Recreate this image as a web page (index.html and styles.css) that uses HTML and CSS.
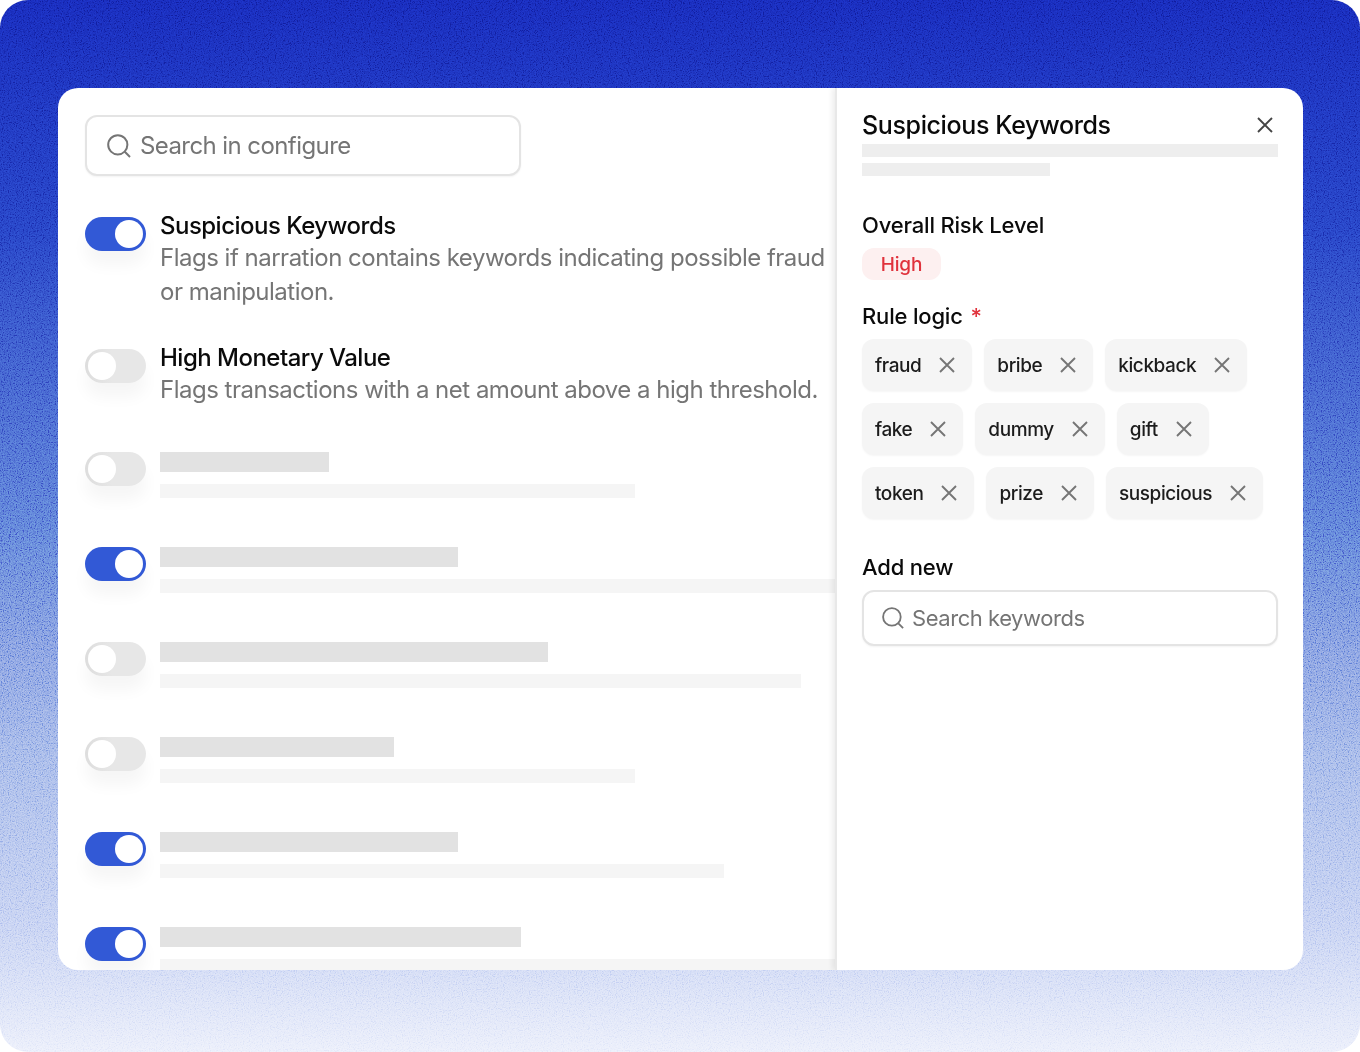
FILE: index.html
```html
<!DOCTYPE html>
<html lang="en">
<head>
    <meta charset="UTF-8">
    <title>Configure rules</title>
    <link rel="stylesheet" href="styles.css">
</head>
<body>
    <svg width="0" height="0" class="defs">
        <symbol id="icon-search" viewBox="0 0 24 24">
            <circle cx="10.8" cy="10.8" r="9.6" fill="none" stroke="currentColor" stroke-width="2"/>
            <path d="M17.8 17.8L23 23" fill="none" stroke="currentColor" stroke-width="2"/>
        </symbol>
        <symbol id="icon-x" viewBox="0 0 16 16">
            <path d="M1 1L15 15M15 1L1 15" fill="none" stroke="currentColor" stroke-width="1.9"/>
        </symbol>
    </svg>

    <div class="frame">
        <!-- grain over the gradient -->
        <svg class="grain" width="1360" height="1052">
            <filter id="grain-filter" x="0" y="0" width="100%" height="100%">
                <feTurbulence type="fractalNoise" baseFrequency="0.85" numOctaves="2" seed="4"/>
                <feColorMatrix type="matrix" values="2.6 0 0 0 -0.8  2.6 0 0 0 -0.8  2.6 0 0 0 -0.8  0 0 0 0 1"/>
            </filter>
            <rect width="1360" height="1052" filter="url(#grain-filter)"/>
        </svg>

        <div class="card">
            <div class="rules">
                <div class="search search-main">
                    <svg class="search-icon"><use href="#icon-search"/></svg>
                    <span>Search in configure</span>
                </div>

                <div class="rule rule-first">
                    <div class="toggle on"></div>
                    <div class="rule-text">
                        <div class="rule-title">Suspicious Keywords</div>
                        <div class="rule-desc">Flags if narration contains keywords indicating possible fraud or manipulation.</div>
                    </div>
                </div>

                <div class="rule rule-second">
                    <div class="toggle"></div>
                    <div class="rule-text">
                        <div class="rule-title">High Monetary Value</div>
                        <div class="rule-desc">Flags transactions with a net amount above a high threshold.</div>
                    </div>
                </div>

                <div class="skeleton-list">
                    <div class="rule">
                        <div class="toggle"></div>
                        <div class="rule-text">
                            <div class="bar bar-title" style="width: 169px"></div>
                            <div class="bar bar-desc" style="width: 475px"></div>
                        </div>
                    </div>
                    <div class="rule">
                        <div class="toggle on"></div>
                        <div class="rule-text">
                            <div class="bar bar-title" style="width: 298px"></div>
                            <div class="bar bar-desc" style="width: 675px"></div>
                        </div>
                    </div>
                    <div class="rule">
                        <div class="toggle"></div>
                        <div class="rule-text">
                            <div class="bar bar-title" style="width: 388px"></div>
                            <div class="bar bar-desc" style="width: 641px"></div>
                        </div>
                    </div>
                    <div class="rule">
                        <div class="toggle"></div>
                        <div class="rule-text">
                            <div class="bar bar-title" style="width: 234px"></div>
                            <div class="bar bar-desc" style="width: 475px"></div>
                        </div>
                    </div>
                    <div class="rule">
                        <div class="toggle on"></div>
                        <div class="rule-text">
                            <div class="bar bar-title" style="width: 298px"></div>
                            <div class="bar bar-desc" style="width: 564px"></div>
                        </div>
                    </div>
                    <div class="rule">
                        <div class="toggle on"></div>
                        <div class="rule-text">
                            <div class="bar bar-title" style="width: 361px"></div>
                            <div class="bar bar-desc" style="width: 675px"></div>
                        </div>
                    </div>
                </div>
            </div>

            <div class="panel">
                <div class="panel-head">
                    <h2>Suspicious Keywords</h2>
                    <svg class="panel-close"><use href="#icon-x"/></svg>
                </div>
                <div class="panel-bar"></div>
                <div class="panel-bar panel-bar-short"></div>

                <div class="label label-risk">Overall Risk Level</div>
                <div class="badge">High</div>

                <div class="label label-logic">Rule logic <span class="required">*</span></div>
                <div class="tags">
                    <div class="tag">fraud<svg class="tag-x"><use href="#icon-x"/></svg></div>
                    <div class="tag">bribe<svg class="tag-x"><use href="#icon-x"/></svg></div>
                    <div class="tag">kickback<svg class="tag-x"><use href="#icon-x"/></svg></div>
                    <div class="tag">fake<svg class="tag-x"><use href="#icon-x"/></svg></div>
                    <div class="tag">dummy<svg class="tag-x"><use href="#icon-x"/></svg></div>
                    <div class="tag">gift<svg class="tag-x"><use href="#icon-x"/></svg></div>
                    <div class="tag">token<svg class="tag-x"><use href="#icon-x"/></svg></div>
                    <div class="tag">prize<svg class="tag-x"><use href="#icon-x"/></svg></div>
                    <div class="tag">suspicious<svg class="tag-x"><use href="#icon-x"/></svg></div>
                </div>

                <div class="label label-add">Add new</div>
                <div class="search search-panel">
                    <svg class="search-icon"><use href="#icon-search"/></svg>
                    <span>Search keywords</span>
                </div>
            </div>
        </div>
    </div>
</body>
</html>
```

FILE: styles.css
```css
:root {
    --blue: #3259d6;
    --text: #0a0a0a;
    --muted: #757575;
    --bar-dark: #e2e2e2;
    --bar-light: #f5f5f5;
    --line: #e4e4e4;
}

* {
    box-sizing: border-box;
    margin: 0;
    padding: 0;
}

body {
    font-family: Inter, "Liberation Sans", sans-serif;
    background-color: #ffffff;
    color: var(--text);
    width: 1360px;
    height: 1052px;
    overflow: hidden;
}

.defs {
    display: block;
    height: 0;
}

.frame {
    position: relative;
    width: 1360px;
    height: 1052px;
    padding: 88px 57px 82px 58px;
    border-radius: 28px;
    overflow: hidden;
    background: linear-gradient(180deg, #1729b6 0%, #2540c2 22%, #5a7ad6 50%, #a0b5e8 72%, #c3cff2 88%, #eaeefb 100%);
}

.grain {
    position: absolute;
    left: 0;
    top: 0;
    opacity: 0.3;
    mix-blend-mode: overlay;
}

.card {
    position: relative;
    display: flex;
    height: 882px;
    background-color: #ffffff;
    border-radius: 20px;
    overflow: hidden;
}

/* Left column */
.rules {
    width: 777px;
    flex-shrink: 0;
    padding: 27px 0 0 27px;
    overflow: hidden;
}

.search {
    display: flex;
    align-items: center;
    background-color: #ffffff;
    border: 2px solid var(--line);
    border-radius: 12px;
    color: var(--muted);
    box-shadow: 0 1px 2px rgba(0, 0, 0, 0.05);
}

.search-main {
    width: 436px;
    height: 61px;
    padding-left: 20px;
    font-size: 24px;
    letter-spacing: -0.58px;
}

.search-main .search-icon {
    width: 24px;
    height: 24px;
    margin-right: 9px;
}

.rule {
    display: flex;
    gap: 14px;
}

.rule-first {
    margin-top: 37px;
}

.rule-second {
    margin-top: 36px;
}

.toggle {
    position: relative;
    width: 61px;
    height: 34px;
    flex-shrink: 0;
    border-radius: 17px;
    background: linear-gradient(90deg, #dddddd, #e7e7e7 45%);
    box-shadow: 0 14px 16px rgba(0, 0, 0, 0.04);
}

.toggle::after {
    content: "";
    position: absolute;
    top: 3px;
    left: 3px;
    width: 28px;
    height: 28px;
    border-radius: 50%;
    background-color: #ffffff;
}

.toggle.on {
    background: var(--blue);
}

.toggle.on::after {
    left: 30px;
}

.rule-first .toggle,
.rule-second .toggle {
    margin-top: 4px;
}

.rule-text {
    flex: 1;
    min-width: 0;
}

.rule-title {
    font-size: 24px;
    font-weight: 500;
    line-height: 26px;
    letter-spacing: -0.52px;
}

.rule-desc {
    font-size: 24px;
    line-height: 34px;
    margin-top: 2px;
    letter-spacing: -0.5px;
    color: var(--muted);
}

.skeleton-list {
    display: flex;
    flex-direction: column;
    gap: 49px;
    margin-top: 45px;
}

.bar {
    height: 20px;
}

.bar-title {
    background-color: var(--bar-dark);
}

.bar-desc {
    height: 14px;
    margin-top: 12px;
    background-color: var(--bar-light);
}

/* Right panel */
.panel {
    position: relative;
    flex: 1;
    padding: 19px 25px 0 25px;
    border-left: 2px solid #e8e8e8;
    box-shadow: -3px 0 5px rgba(0, 0, 0, 0.07);
}

.panel-head {
    display: flex;
    align-items: center;
    justify-content: space-between;
    height: 36px;
}

.panel-head h2 {
    font-size: 25px;
    font-weight: 500;
    letter-spacing: -0.37px;
}

.panel-close {
    width: 16px;
    height: 16px;
    margin-right: 5px;
    color: #444444;
}

.panel-bar {
    height: 13px;
    margin-top: 1px;
    background-color: #eeeeee;
}

.panel-bar-short {
    width: 188px;
    margin-top: 6px;
}

.label {
    font-size: 22px;
    font-weight: 500;
    line-height: 28px;
    letter-spacing: -0.18px;
}

.label-risk {
    margin-top: 35px;
}

.badge {
    display: flex;
    align-items: center;
    justify-content: center;
    width: 79px;
    height: 32px;
    margin-top: 9px;
    border-radius: 12px;
    background-color: #fdf0f0;
    color: #e0323c;
    font-size: 19px;
    font-weight: 500;
    letter-spacing: -0.2px;
}

.label-logic {
    margin-top: 22px;
}

.required {
    margin-left: 2px;
    color: #e0323c;
}

.tags {
    display: flex;
    flex-wrap: wrap;
    gap: 12px;
    margin-top: 9px;
}

.tag {
    display: flex;
    align-items: center;
    height: 52px;
    padding: 0 17px 0 13px;
    border-radius: 12px;
    background-color: #f5f5f5;
    font-size: 19px;
    font-weight: 500;
    letter-spacing: -0.42px;
    color: #1c1c1c;
    box-shadow: 0 1px 2px rgba(0, 0, 0, 0.04);
}

.tag-x {
    width: 16px;
    height: 16px;
    margin-left: 18px;
    color: var(--muted);
}

.label-add {
    margin-top: 34px;
}

.search-panel {
    height: 56px;
    margin-top: 9px;
    padding-left: 18px;
    font-size: 22px;
    letter-spacing: -0.45px;
}

.search-panel .search-icon {
    width: 22px;
    height: 22px;
    margin-right: 8px;
}
```
